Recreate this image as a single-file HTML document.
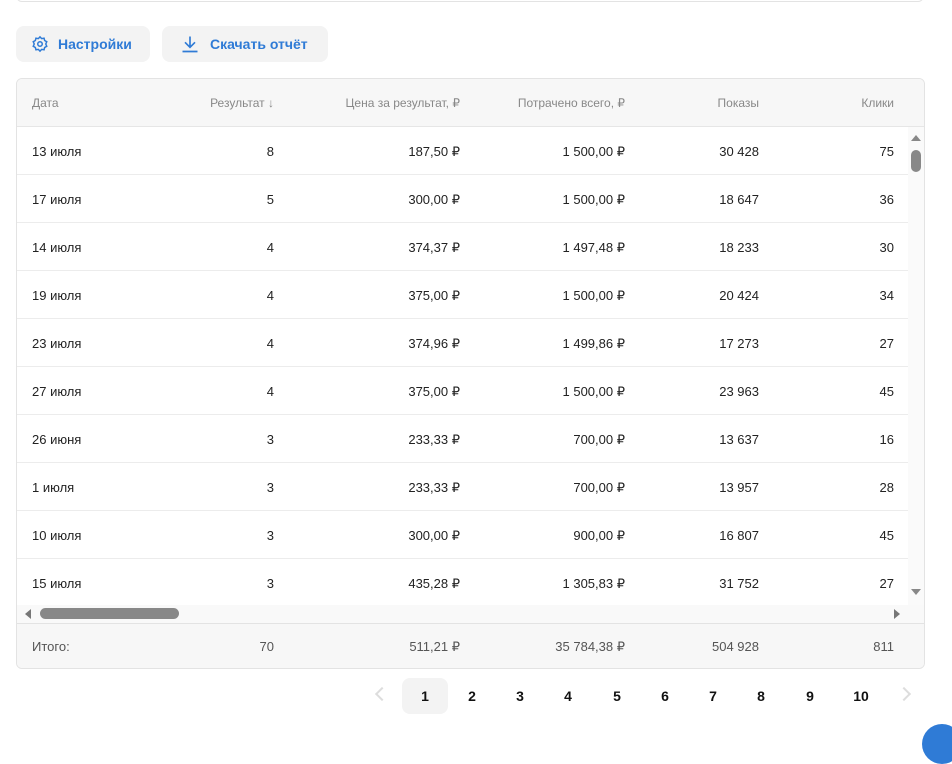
<!DOCTYPE html>
<html><head><meta charset="utf-8"><style>
*{box-sizing:border-box;margin:0;padding:0}
body{width:952px;height:732px;overflow:hidden;background:#fff;font-family:"Liberation Sans",sans-serif;position:relative;color:#222}
.abs{position:absolute}
.topcard{left:16px;top:-10px;width:908px;height:12px;border:1px solid #e3e3e3;border-radius:8px}
.btn{top:26px;height:36px;background:#f3f3f3;border-radius:8px;color:#2f7bd6;font-size:14px;font-weight:bold;display:flex;align-items:center}
.table{left:16px;top:78px;width:909px;height:591px;border:1px solid #e3e3e3;border-radius:6px;overflow:hidden;background:#fff}
.hdr{left:0;top:0;width:907px;height:48px;background:#f7f7f7;border-bottom:1px solid #e6e6e6}
.c{position:absolute;font-size:13px;white-space:nowrap}
.h{color:#888;font-size:12px}
.row{position:absolute;left:0;width:891px;height:48px;border-bottom:1px solid #ececec}
.foot{left:0;top:544px;width:907px;height:46px;background:#f7f7f7;border-top:1px solid #e3e3e3}
.pg{top:678px;width:46px;height:36px;font-size:14px;font-weight:bold;text-align:center;line-height:36px;color:#111}
</style></head><body>
<div class="abs topcard"></div>
<div class="abs btn" style="left:16px;width:134px;padding-left:15px">
<svg width="18" height="18" viewBox="0 0 24 24" fill="none" stroke="#2f7bd6" stroke-width="2"><circle cx="12" cy="12" r="3"/><path d="M12 2.5l2.2 2.3 3.2-.5.8 3.1 2.8 1.6-1.3 3 1.3 3-2.8 1.6-.8 3.1-3.2-.5L12 21.5l-2.2-2.3-3.2.5-.8-3.1-2.8-1.6 1.3-3-1.3-3 2.8-1.6.8-3.1 3.2.5z"/></svg>
<span style="margin-left:9px">Настройки</span></div>
<div class="abs btn" style="left:162px;width:166px;padding-left:18px">
<svg width="20" height="20" viewBox="0 0 24 24" fill="none" stroke="#2f7bd6" stroke-width="2"><path d="M12 3v13M6 10l6 6 6-6M3 21h18"/></svg>
<span style="margin-left:10px">Скачать отчёт</span></div>

<div class="abs table">
<div class="abs hdr">
<span class="c h" style="left:15px;top:17px">Дата</span>
<span class="c h" style="right:650px;top:17px">Результат ↓</span>
<span class="c h" style="right:464px;top:17px">Цена за результат, ₽</span>
<span class="c h" style="right:299px;top:17px">Потрачено всего, ₽</span>
<span class="c h" style="right:165px;top:17px">Показы</span>
<span class="c h" style="right:30px;top:17px">Клики</span>
</div>
<div id="rows"></div>
<div class="abs" style="left:0;top:526px;width:907px;height:18px;background:#f9f9f9"></div>
<div class="abs" style="left:8px;top:530px;width:0;height:0;border-top:5px solid transparent;border-bottom:5px solid transparent;border-right:6px solid #777"></div>
<div class="abs" style="left:23px;top:529px;width:139px;height:11px;background:#888;border-radius:6px"></div>
<div class="abs" style="left:877px;top:530px;width:0;height:0;border-top:5px solid transparent;border-bottom:5px solid transparent;border-left:6px solid #777"></div>
<div class="abs" style="left:891px;top:48px;width:16px;height:478px;background:#fafafa"></div>
<div class="abs" style="left:894px;top:56px;width:0;height:0;border-left:5px solid transparent;border-right:5px solid transparent;border-bottom:6px solid #888"></div>
<div class="abs" style="left:894px;top:71px;width:10px;height:22px;background:#888;border-radius:5px"></div>
<div class="abs" style="left:894px;top:510px;width:0;height:0;border-left:5px solid transparent;border-right:5px solid transparent;border-top:6px solid #888"></div>
<div class="abs foot">
<span class="c" style="left:15px;top:15px;color:#555">Итого:</span>
<span class="c" style="right:650px;top:15px;color:#555">70</span>
<span class="c" style="right:464px;top:15px;color:#555">511,21 ₽</span>
<span class="c" style="right:299px;top:15px;color:#555">35 784,38 ₽</span>
<span class="c" style="right:165px;top:15px;color:#555">504 928</span>
<span class="c" style="right:30px;top:15px;color:#555">811</span>
</div>
</div>

<div class="abs" style="left:377px;top:689px;width:10px;height:10px;border-left:2px solid #ddd;border-bottom:2px solid #ddd;transform:rotate(45deg)"></div>
<div class="abs pg" style="left:402px;background:#f3f3f3;border-radius:8px">1</div>
<div class="abs pg" style="left:449px">2</div>
<div class="abs pg" style="left:497px">3</div>
<div class="abs pg" style="left:545px">4</div>
<div class="abs pg" style="left:594px">5</div>
<div class="abs pg" style="left:642px">6</div>
<div class="abs pg" style="left:690px">7</div>
<div class="abs pg" style="left:738px">8</div>
<div class="abs pg" style="left:787px">9</div>
<div class="abs pg" style="left:838px">10</div>
<div class="abs" style="left:899px;top:689px;width:10px;height:10px;border-right:2px solid #ddd;border-top:2px solid #ddd;transform:rotate(45deg)"></div>
<div class="abs" style="left:922px;top:724px;width:40px;height:40px;border-radius:50%;background:#2f7bd6"></div>

<script>
var d=[["13 июля","8","187,50 ₽","1 500,00 ₽","30 428","75"],["17 июля","5","300,00 ₽","1 500,00 ₽","18 647","36"],["14 июля","4","374,37 ₽","1 497,48 ₽","18 233","30"],["19 июля","4","375,00 ₽","1 500,00 ₽","20 424","34"],["23 июля","4","374,96 ₽","1 499,86 ₽","17 273","27"],["27 июля","4","375,00 ₽","1 500,00 ₽","23 963","45"],["26 июня","3","233,33 ₽","700,00 ₽","13 637","16"],["1 июля","3","233,33 ₽","700,00 ₽","13 957","28"],["10 июля","3","300,00 ₽","900,00 ₽","16 807","45"],["15 июля","3","435,28 ₽","1 305,83 ₽","31 752","27"]];
var r=[650,464,299,165,30],h="";
d.forEach(function(x,i){h+='<div class="row" style="top:'+(48+i*48)+'px;'+(i==9?'border-bottom:none':'')+'"><span class="c" style="left:15px;top:17px">'+x[0]+'</span>';for(var j=1;j<6;j++)h+='<span class="c" style="right:'+(r[j-1]-16)+'px;top:17px">'+x[j]+'</span>';h+='</div>';});
document.getElementById('rows').innerHTML=h;
</script>
</body></html>
